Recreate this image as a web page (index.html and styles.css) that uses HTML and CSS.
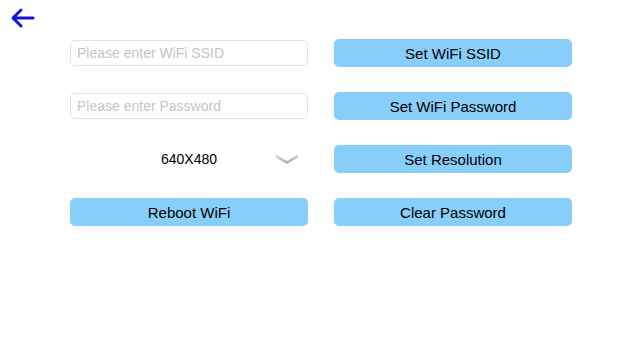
FILE: index.html
```html
<!DOCTYPE html>
<html>
<head lang="en">
	<meta charset="UTF-8">
	<meta name="viewport" content="width=device-width, initial-scale=1.0">
	<title>WiFi Settings</title>
	<link rel="stylesheet" href="styles.css">
</head>
<body>

<div class="wrapper">

	<div class="top-bar">
		<button class="back" type="button" aria-label="Back">
			<svg width="26" height="22" viewBox="0 0 26 22">
				<path d="M3 11 H23 M11 3 L3 11 L11 19" fill="none" stroke="#1111dd" stroke-width="3" stroke-linecap="round" stroke-linejoin="round"/>
			</svg>
		</button>
	</div>

	<div class="settings">
		<div class="cell">
			<input class="field" type="text" placeholder="Please enter WiFi SSID">
		</div>
		<div class="cell">
			<button class="action" type="button">Set WiFi SSID</button>
		</div>

		<div class="cell">
			<input class="field" type="password" placeholder="Please enter Password">
		</div>
		<div class="cell">
			<button class="action" type="button">Set WiFi Password</button>
		</div>

		<div class="cell picker">
			<span class="picker-value">640X480</span>
			<svg class="chevron" width="24" height="12" viewBox="0 0 24 12">
				<defs>
					<linearGradient id="chev" x1="0" y1="0" x2="0" y2="1">
						<stop offset="0" stop-color="#d4d4d4"/>
						<stop offset="1" stop-color="#a9a9a9"/>
					</linearGradient>
				</defs>
				<path d="M1 1.5 L12 8 L23 1.5 L23 4.5 L12 11 L1 4.5 Z" fill="url(#chev)"/>
			</svg>
		</div>
		<div class="cell">
			<button class="action" type="button">Set Resolution</button>
		</div>

		<div class="cell">
			<button class="action" type="button">Reboot WiFi</button>
		</div>
		<div class="cell">
			<button class="action" type="button">Clear Password</button>
		</div>
	</div>

</div>

</body>
</html>
```

FILE: styles.css
```css
* {
	margin: 0;
	padding: 0;
	box-sizing: border-box;
	font-family: "Liberation Sans", "Helvetica", "Arial", sans-serif;
}
body {
	background: #ffffff;
}
.wrapper {
	width: 643px;
	height: 362px;
}
.top-bar {
	height: 39px;
	padding: 7px 0 0 10px;
}
.back {
	display: block;
	width: 26px;
	height: 22px;
	border: 0;
	background: none;
	cursor: pointer;
}
.back svg {
	display: block;
}
.settings {
	display: grid;
	grid-template-columns: 238px 238px;
	grid-auto-rows: 28px;
	column-gap: 26px;
	row-gap: 25px;
	margin-left: 70px;
}
.cell {
	display: flex;
	align-items: center;
}
.field {
	width: 100%;
	height: 26px;
	border: 1px solid #e3e3e6;
	border-radius: 5px;
	padding: 0 6px;
	font-size: 14px;
	color: #222;
	outline: none;
}
.field::placeholder {
	color: #c4c4c9;
}
.action {
	width: 100%;
	height: 28px;
	border: 0;
	border-radius: 5px;
	background: #87cefa;
	color: #000000;
	font-size: 15px;
	text-align: center;
	cursor: pointer;
}
.picker {
	display: grid;
	grid-template-columns: 1fr auto 1fr;
	align-items: center;
}
.picker-value {
	grid-column: 2;
	font-size: 14px;
	color: #000000;
}
.chevron {
	grid-column: 3;
	justify-self: end;
	margin-right: 9px;
	display: block;
}
```
